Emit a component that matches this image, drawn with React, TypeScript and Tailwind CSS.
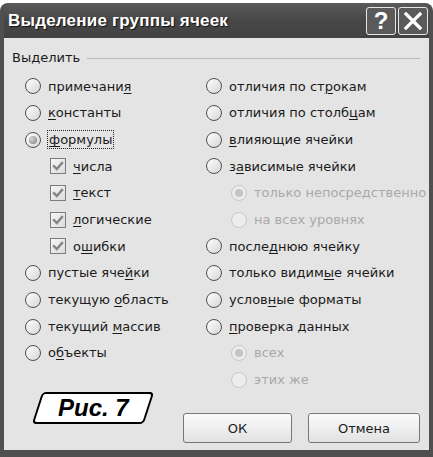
import React from "react";

type Item =
  | { kind: "radio"; label: React.ReactNode; checked?: boolean; disabled?: boolean; indent?: boolean; focus?: boolean }
  | { kind: "check"; label: React.ReactNode };

const U = ({ children }: { children: React.ReactNode }) => (
  <span className="underline underline-offset-[2px] decoration-[1px]">{children}</span>
);

function Radio({ checked, disabled }: { checked?: boolean; disabled?: boolean }) {
  return (
    <div
      className={
        "relative flex h-[16px] w-[16px] shrink-0 items-center justify-center rounded-full border " +
        (disabled
          ? "border-[#c9c9c9] bg-[#ececec]"
          : "border-[#505050] bg-gradient-to-br from-[#ffffff] to-[#d6d6d6]")
      }
    >
      {checked && (
        <div
          className={
            "h-[8px] w-[8px] rounded-full " +
            (disabled
              ? "bg-[#c4c4c4]"
              : "bg-[radial-gradient(circle_at_35%_35%,#d8d8d8,#7a7a7a)]")
          }
        />
      )}
    </div>
  );
}

function Check() {
  return (
    <div className="flex h-[16px] w-[16px] shrink-0 items-center justify-center border border-[#7c7c7c] bg-gradient-to-br from-[#f6f6f6] to-[#dcdcdc]">
      <svg width="12" height="12" viewBox="0 0 12 12">
        <path d="M2 6.2 L4.8 9 L10 3" fill="none" stroke="#858585" strokeWidth="2.4" strokeLinecap="square" />
      </svg>
    </div>
  );
}

function Row({ item }: { item: Item }) {
  if (item.kind === "check") {
    return (
      <div className="flex h-[26.7px] items-center pl-[25px]">
        <Check />
        <span className="ml-[7px]">{item.label}</span>
      </div>
    );
  }
  return (
    <div className={"flex h-[26.7px] items-center " + (item.indent ? "pl-[25px]" : "")}>
      <Radio checked={item.checked} disabled={item.disabled} />
      {item.focus ? (
        <span className="ml-[6px] border border-dotted border-[#222] px-[1px] leading-[17px]">{item.label}</span>
      ) : (
        <span className={"ml-[7px] " + (item.disabled ? "text-[#a9a9a9]" : "")}>{item.label}</span>
      )}
    </div>
  );
}

const left: Item[] = [
  { kind: "radio", label: <>примечани<U>я</U></> },
  { kind: "radio", label: <><U>к</U>онстанты</> },
  { kind: "radio", label: <><U>ф</U>ормулы</>, checked: true, focus: true },
  { kind: "check", label: <><U>ч</U>исла</> },
  { kind: "check", label: <><U>т</U>екст</> },
  { kind: "check", label: <><U>л</U>огические</> },
  { kind: "check", label: <>о<U>ш</U>ибки</> },
  { kind: "radio", label: <>пустые яче<U>й</U>ки</> },
  { kind: "radio", label: <>текущую <U>о</U>бласть</> },
  { kind: "radio", label: <>текущий <U>м</U>ассив</> },
  { kind: "radio", label: <>о<U>б</U>ъекты</> },
];

const right: Item[] = [
  { kind: "radio", label: <>отличия по ст<U>р</U>окам</> },
  { kind: "radio", label: <>отличия по столб<U>ц</U>ам</> },
  { kind: "radio", label: <><U>в</U>лияющие ячейки</> },
  { kind: "radio", label: <>з<U>а</U>висимые ячейки</> },
  { kind: "radio", label: "только непосредственно", disabled: true, checked: true, indent: true },
  { kind: "radio", label: "на всех уровнях", disabled: true, indent: true },
  { kind: "radio", label: <>после<U>д</U>нюю ячейку</> },
  { kind: "radio", label: <>только видим<U>ы</U>е ячейки</> },
  { kind: "radio", label: <>услов<U>н</U>ые форматы</> },
  { kind: "radio", label: <><U>п</U>роверка данных</> },
  { kind: "radio", label: "всех", disabled: true, checked: true, indent: true },
  { kind: "radio", label: "этих же", disabled: true, indent: true },
];

export default function App() {
  return (
    <div className="h-[457px] w-[433px] bg-white pt-[3px]" style={{ fontFamily: '"DejaVu Sans", sans-serif' }}>
      <div className="flex h-[454px] flex-col rounded-t-[8px] bg-[#4f4f4f] px-[4px] pb-[7px]">
        {/* title bar */}
        <div className="flex h-[35px] shrink-0 items-center rounded-t-[8px] bg-gradient-to-b from-[#5a5a5a] via-[#474747] to-[#424242] pl-[4px] pr-[1px]">
          <span
            className="flex-1 text-[17px] font-bold tracking-[0.2px] text-white"
            style={{ fontFamily: '"Liberation Sans", Arial, sans-serif', textShadow: "1px 1px 1px #111" }}
          >
            Выделение группы ячеек
          </span>
          <div className="flex gap-[2px]">
            <div className="flex h-[28px] w-[30px] items-center justify-center rounded-[3px] border-[1.5px] border-[#e6e6e6] bg-[#5a5a5a]">
              <span
                className="text-[24px] font-bold leading-none text-white"
                style={{ fontFamily: '"Liberation Sans", Arial, sans-serif' }}
              >
                ?
              </span>
            </div>
            <div className="flex h-[28px] w-[30px] items-center justify-center rounded-[3px] border-[1.5px] border-[#e6e6e6] bg-[#5a5a5a]">
              <svg width="20" height="20" viewBox="0 0 20 20">
                <path d="M3 3 L17 17 M17 3 L3 17" stroke="white" strokeWidth="3.2" strokeLinecap="square" />
              </svg>
            </div>
          </div>
        </div>
        {/* client */}
        <div className="relative flex flex-1 flex-col bg-[#e4e4e4] pl-[21px] pt-[12px] text-[13px] text-[#1b1b1b]">
          <div className="-ml-[13px] flex h-[16px] items-center pr-[9px]">
            <span>Выделить</span>
            <div className="ml-[7px] h-px flex-1 bg-[#b9b9b9]" />
          </div>
          <div className="mt-[7px] flex">
            <div className="flex w-[181px] flex-col">
              {left.map((it, i) => (
                <Row key={i} item={it} />
              ))}
            </div>
            <div className="flex flex-col">
              {right.map((it, i) => (
                <Row key={i} item={it} />
              ))}
            </div>
          </div>
          <div className="mt-[20px] flex justify-end gap-[16px] pr-[9px]">
            <div className="flex h-[30px] w-[109px] items-center justify-center rounded-[3px] border border-[#777] bg-gradient-to-b from-[#fbfbfb] to-[#e2e2e2]">
              ОК
            </div>
            <div className="flex h-[30px] w-[112px] items-center justify-center rounded-[3px] border border-[#777] bg-gradient-to-b from-[#fbfbfb] to-[#e2e2e2]">
              Отмена
            </div>
          </div>
          {/* figure label */}
          <div className="absolute left-[33px] top-[354px] flex h-[32px] w-[112px] skew-x-[-18deg] items-center justify-center rounded-[4px] border-2 border-black bg-white">
            <span
              className="skew-x-[18deg] text-[24px] font-bold italic text-black"
              style={{ fontFamily: '"Liberation Sans", Arial, sans-serif' }}
            >
              Рис. 7
            </span>
          </div>
        </div>
      </div>
    </div>
  );
}
